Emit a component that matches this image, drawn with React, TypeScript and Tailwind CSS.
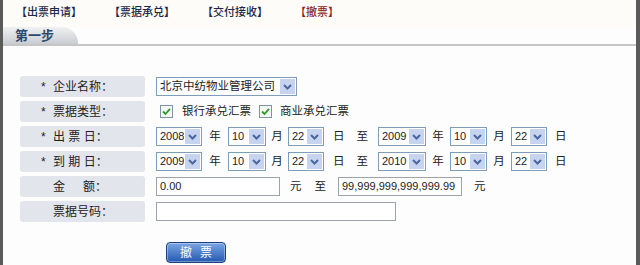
import React from 'react';

// ─────────────────────────────────────────────
// Small form controls (old XP look)
// ─────────────────────────────────────────────
const Chevron = () => (
  <svg width="9" height="6" viewBox="0 0 9 6">
    <path d="M1 1 L4.5 4.5 L8 1" fill="none" stroke="#4a67a0" strokeWidth="2" />
  </svg>
);

const Select = ({ value, w }: { value: string; w: string }) => (
  <div className={`flex h-[19px] shrink-0 items-stretch border border-[#7f9db9] bg-white ${w}`}>
    <span className="flex flex-1 items-center overflow-hidden whitespace-nowrap pl-[3px] text-[11px] text-[#222]">
      {value}
    </span>
    <span className="m-px flex w-[15px] items-center justify-center bg-[#c6d4ef]">
      <Chevron />
    </span>
  </div>
);

const TextBox = ({ value = '', w }: { value?: string; w: string }) => (
  <div
    className={`flex h-[19px] shrink-0 items-center border border-[#9da3a8] bg-white pl-[3px] text-[11px] text-[#222] ${w}`}
  >
    {value}
  </div>
);

const Check = () => (
  <svg width="13" height="13" viewBox="0 0 13 13" className="shrink-0">
    <rect x="0.5" y="0.5" width="12" height="12" fill="#f4f7f4" stroke="#7d93a8" />
    <path d="M3 6.5 L5.5 9 L10 3.8" fill="none" stroke="#2a9d2a" strokeWidth="1.8" />
  </svg>
);

// ─────────────────────────────────────────────
// Form rows
// ─────────────────────────────────────────────
const Label = ({ star = true, children }: { star?: boolean; children: React.ReactNode }) => (
  <div className="flex h-full w-[125px] shrink-0 items-center rounded-[3px] bg-[#e2e6ec] pl-[21px] text-[12px] text-[#222]">
    <span className="w-[12px]">{star ? '*' : ''}</span>
    {children}
  </div>
);

const Row = ({ label, children }: { label: React.ReactNode; children: React.ReactNode }) => (
  <div className="flex h-[21px] items-center">
    {label}
    <div className="ml-[11px] flex items-center text-[11.5px] text-[#222]">{children}</div>
  </div>
);

const DateRange = ({ from, to }: { from: string[]; to: string[] }) => (
  <>
    <Select value={from[0]} w="w-[46px]" />
    <span className="w-[26px] text-center">年</span>
    <Select value={from[1]} w="w-[38px]" />
    <span className="w-[22px] text-center">月</span>
    <Select value={from[2]} w="w-[36px]" />
    <span className="flex w-[54px] pl-[9px]">
      日<span className="ml-[12px]">至</span>
    </span>
    <Select value={to[0]} w="w-[48px]" />
    <span className="w-[24px] text-center">年</span>
    <Select value={to[1]} w="w-[37px]" />
    <span className="w-[24px] text-center">月</span>
    <Select value={to[2]} w="w-[36px]" />
    <span className="ml-[8px]">日</span>
  </>
);

// ─────────────────────────────────────────────
// Page
// ─────────────────────────────────────────────
export default function App() {
  return (
    <div className="h-[265px] w-[640px] overflow-hidden border-l-[3px] border-r-[4px] border-[#5a5a5a] bg-[#fefdfd] font-['Liberation_Sans','Noto_Sans_CJK_SC',sans-serif]">
      {/* top links */}
      <div className="flex h-[27px] items-center gap-[27px] bg-[#fdfcf8] pl-[13px] pb-[3px] text-[11px] font-medium text-[#1b2848]">
        <span>【出票申请】</span>
        <span>【票据承兑】</span>
        <span>【交付接收】</span>
        <span className="text-[#8a2626]">【撤票】</span>
      </div>

      {/* step tab */}
      <div className="flex h-[17px]">
        <div className="flex w-[75px] items-center rounded-tr-[16px] bg-linear-to-b from-[#f0f1f3] to-[#c9cdd2] pl-[12px] text-[13px] font-bold text-[#2c4a6e]">
          第一步
        </div>
      </div>
      <div className="h-[2px] bg-[#c6c6c6]" />

      {/* form */}
      <div className="mt-[30px] flex flex-col gap-[4px] pl-[17px]">
        <Row label={<Label>企业名称：</Label>}>
          <div className="flex h-[19px] w-[141px] shrink-0 items-stretch border border-[#7f9db9] bg-white">
            <span className="flex flex-1 items-center whitespace-nowrap pl-[3px] text-[11.5px]">北京中纺物业管理公司</span>
            <span className="m-px flex w-[15px] items-center justify-center bg-[#c6d4ef]">
              <Chevron />
            </span>
          </div>
        </Row>
        <Row label={<Label>票据类型：</Label>}>
          <span className="ml-[4px] flex items-center">
            <Check />
            <span className="ml-[9px]">银行承兑汇票</span>
          </span>
          <span className="ml-[8px] flex items-center">
            <Check />
            <span className="ml-[8px]">商业承兑汇票</span>
          </span>
        </Row>
        <Row label={<Label>出 票 日：</Label>}>
          <DateRange from={['2008', '10', '22']} to={['2009', '10', '22']} />
        </Row>
        <Row label={<Label>到 期 日：</Label>}>
          <DateRange from={['2009', '10', '22']} to={['2010', '10', '22']} />
        </Row>
        <Row
          label={
            <Label star={false}>
              金<span className="ml-[18px]">额：</span>
            </Label>
          }
        >
          <TextBox value="0.00" w="w-[124px]" />
          <span className="ml-[10px]">元</span>
          <span className="ml-[13px]">至</span>
          <TextBox value="99,999,999,999,999.99" w="ml-[12px] w-[124px]" />
          <span className="ml-[12px]">元</span>
        </Row>
        <Row label={<Label star={false}>票据号码：</Label>}>
          <TextBox w="w-[240px]" />
        </Row>
      </div>

      {/* submit */}
      <div className="mt-[20px] pl-[163px]">
        <button className="flex h-[21px] w-[60px] items-center justify-center rounded-[4px] border border-[#1d3f7c] bg-linear-to-b from-[#7aa6e4] to-[#2459b0] text-[12px] tracking-[8px] text-white shadow-[inset_0_0_0_1px_rgba(255,255,255,0.35)]">
          <span className="pl-[8px]">撤票</span>
        </button>
      </div>
    </div>
  );
}
